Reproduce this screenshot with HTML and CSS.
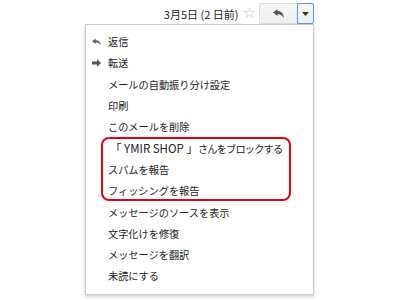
FILE: index.html
```html
<!DOCTYPE html>
<html lang="ja">
<head>
    <meta charset="UTF-8">
    <title>メールメニュー</title>
    <link rel="stylesheet" href="styles.css">
</head>
<body>

    <!-- ヘッダー -->
    <div class="header">
        <span class="date">3月5日 (2 日前)</span>
        <span class="star">☆</span>
        <div class="btn-group">
            <button class="btn reply-btn">
                <svg width="11" height="9" viewBox="0 0 11 9"><path d="M0 3.5 L4.5 0 L4.5 2 C8 2 10.5 4.5 11 9 C9.5 6.5 7.5 5.2 4.5 5.2 L4.5 7 Z" fill="#555"/></svg>
            </button>
            <button class="btn more-btn">
                <svg width="7" height="4" viewBox="0 0 7 4"><path d="M0 0 L7 0 L3.5 4 Z" fill="#333"/></svg>
            </button>
        </div>
    </div>

    <!-- メニュー -->
    <div class="menu">
        <div class="item">
            <span class="icon">
                <svg width="9" height="8" viewBox="0 0 11 9"><path d="M0 3.5 L4.5 0 L4.5 2 C8 2 10.5 4.5 11 9 C9.5 6.5 7.5 5.2 4.5 5.2 L4.5 7 Z" fill="#666"/></svg>
            </span>
            返信
        </div>
        <div class="item">
            <span class="icon">
                <svg width="9" height="8" viewBox="0 0 9 8"><path d="M0 2.5 L5 2.5 L5 0 L9 4 L5 8 L5 5.5 L0 5.5 Z" fill="#555"/></svg>
            </span>
            転送
        </div>
        <div class="item"><span class="icon"></span>メールの自動振り分け設定</div>
        <div class="item"><span class="icon"></span>印刷</div>
        <div class="item"><span class="icon"></span>このメールを削除</div>
        <div class="highlight">
            <div class="item"><span class="icon"></span><span class="sender">「 YMIR SHOP 」</span><span class="narrow">さんをブロックする</span></div>
            <div class="item"><span class="icon"></span>スパムを報告</div>
            <div class="item"><span class="icon"></span>フィッシングを報告</div>
        </div>
        <div class="item"><span class="icon"></span>メッセージのソースを表示</div>
        <div class="item"><span class="icon"></span>文字化けを修復</div>
        <div class="item"><span class="icon"></span>メッセージを翻訳</div>
        <div class="item"><span class="icon"></span>未読にする</div>
    </div>

</body>
</html>
```

FILE: styles.css
```css
/* 全体 */
* {
    margin: 0;
    padding: 0;
    box-sizing: border-box;
}

body {
    font-family: "Noto Sans CJK JP", "Liberation Sans", sans-serif;
    background-color: #fff;
    color: #222;
    width: 400px;
    height: 300px;
    overflow: hidden;
}

/* ヘッダー */
.header {
    display: flex;
    justify-content: flex-end;
    align-items: center;
    padding: 3px 86px 0 0;
    height: 24px;
}

.date {
    font-size: 11px;
    color: #222;
    margin-right: 4px;
}

.star {
    font-family: "DejaVu Sans", sans-serif;
    font-size: 15px;
    line-height: 1;
    color: #c4c4c4;
    margin-right: 3px;
}

.btn-group {
    display: flex;
    height: 21px;
}

.btn {
    display: flex;
    justify-content: center;
    align-items: center;
    height: 21px;
    background: linear-gradient(#f6f6f6, #efefef);
    border: 1px solid #dcdcdc;
    cursor: pointer;
}

.reply-btn {
    width: 38px;
    border-radius: 2px 0 0 2px;
    border-right: none;
}

.more-btn {
    width: 17px;
    border: 1px solid #4d90fe;
    border-radius: 0 2px 2px 0;
}

/* メニュー */
.menu {
    width: 229px;
    margin-left: 85px;
    background-color: #fff;
    border: 1px solid #ccc;
    box-shadow: 0 2px 3px rgba(0, 0, 0, 0.2);
    padding: 6px 0 7px;
    font-size: 10.2px;
}

.item {
    display: flex;
    align-items: center;
    height: 21.3px;
    padding-left: 6px;
    white-space: nowrap;
}

.icon {
    display: flex;
    align-items: center;
    width: 16px;
    flex-shrink: 0;
}

.sender {
    font-size: 11.5px;
    margin-left: 2px;
}

.narrow {
    letter-spacing: -0.8px;
}

/* 赤枠 */
.highlight {
    position: relative;
}

.highlight::after {
    content: "";
    position: absolute;
    top: 0;
    left: 15px;
    right: 22px;
    bottom: 0;
    border: 2px solid #e2001a;
    border-radius: 8px;
}
```
